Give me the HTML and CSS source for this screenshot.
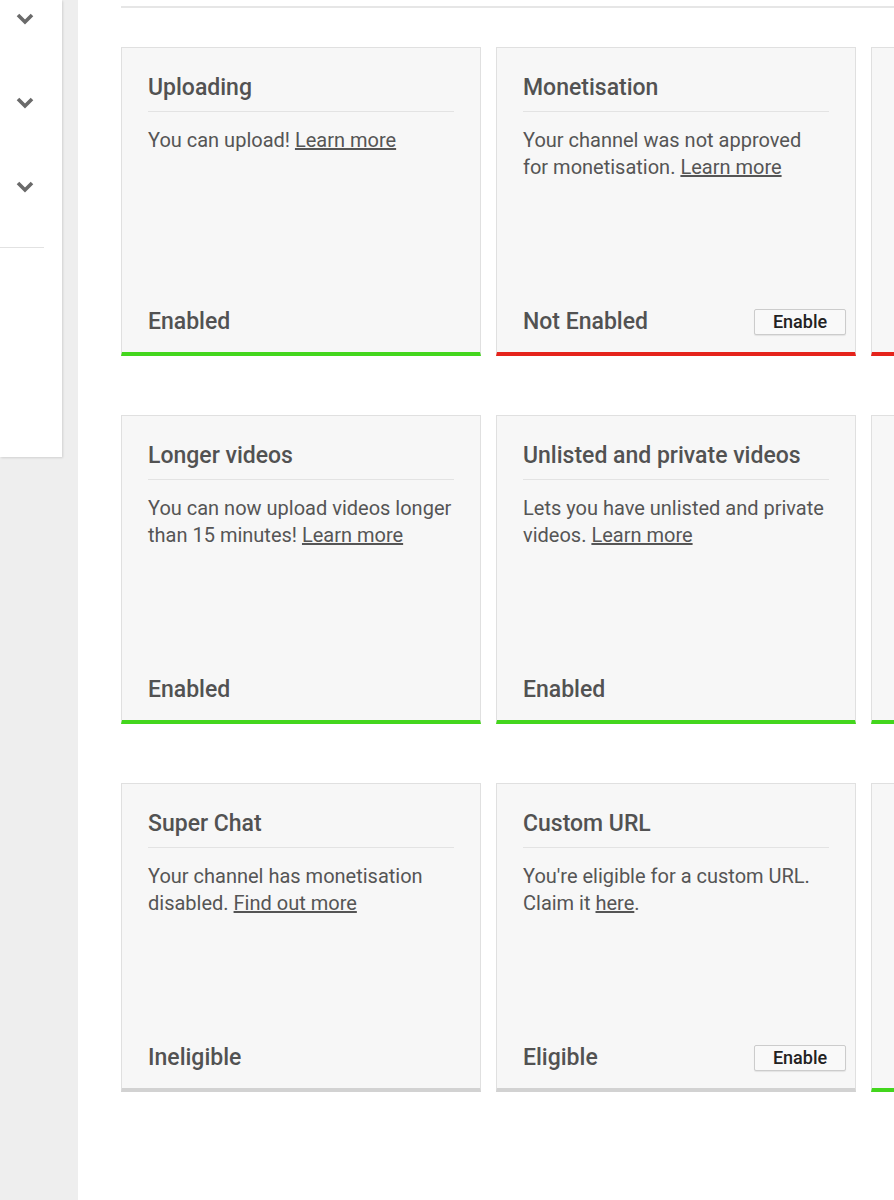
FILE: index.html
```html
<!DOCTYPE html>
<html lang="en">
<head>
<meta charset="utf-8">
<title>Channel features</title>
<link rel="stylesheet" href="styles.css">
</head>
<body>
<div class="page">
  <aside class="sidebar">
    <div class="side-list">
      <div class="side-row"><svg class="chev" width="18" height="12" viewBox="0 0 18 12"><path d="M2 2 L9 9 L16 2" /></svg></div>
      <div class="side-row"><svg class="chev" width="18" height="12" viewBox="0 0 18 12"><path d="M2 2 L9 9 L16 2" /></svg></div>
      <div class="side-row"><svg class="chev" width="18" height="12" viewBox="0 0 18 12"><path d="M2 2 L9 9 L16 2" /></svg></div>
    </div>
    <div class="side-rule"></div>
  </aside>
  <main class="main">
    <div class="top-rule"></div>
    <div class="grid">
      <section class="card green">
        <div class="card-body">
          <h2 class="title">Uploading</h2>
          <p class="desc">You can upload! <a href="#">Learn more</a></p>
        </div>
        <div class="foot"><span class="status">Enabled</span></div>
      </section>
      <section class="card red">
        <div class="card-body">
          <h2 class="title">Monetisation</h2>
          <p class="desc">Your channel was not approved for monetisation. <a href="#">Learn more</a></p>
        </div>
        <div class="foot"><span class="status">Not Enabled</span><button class="btn">Enable</button></div>
      </section>
      <section class="card red"><div class="card-body"></div><div class="foot"></div></section>

      <section class="card green">
        <div class="card-body">
          <h2 class="title">Longer videos</h2>
          <p class="desc">You can now upload videos longer than 15 minutes! <a href="#">Learn more</a></p>
        </div>
        <div class="foot"><span class="status">Enabled</span></div>
      </section>
      <section class="card green">
        <div class="card-body">
          <h2 class="title">Unlisted and private videos</h2>
          <p class="desc">Lets you have unlisted and private videos. <a href="#">Learn more</a></p>
        </div>
        <div class="foot"><span class="status">Enabled</span></div>
      </section>
      <section class="card green"><div class="card-body"></div><div class="foot"></div></section>

      <section class="card grey">
        <div class="card-body">
          <h2 class="title">Super Chat</h2>
          <p class="desc">Your channel has monetisation disabled. <a href="#">Find out more</a></p>
        </div>
        <div class="foot"><span class="status">Ineligible</span></div>
      </section>
      <section class="card grey">
        <div class="card-body">
          <h2 class="title">Custom URL</h2>
          <p class="desc">You're eligible for a custom URL. Claim it <a href="#">here</a>.</p>
        </div>
        <div class="foot"><span class="status">Eligible</span><button class="btn">Enable</button></div>
      </section>
      <section class="card green"><div class="card-body"></div><div class="foot"></div></section>
    </div>
  </main>
</div>
</body>
</html>
```
FILE: styles.css
```css
html, body {
  margin: 0;
  padding: 0;
}
body {
  background: #eeeeee;
  font-family: Roboto, "Liberation Sans", Arial, sans-serif;
  color: #505050;
  width: 894px;
  height: 1200px;
  overflow: hidden;
}
.page {
  display: flex;
  align-items: flex-start;
  gap: 16px;
  height: 1200px;
}
.sidebar {
  flex: 0 0 62px;
  width: 62px;
  height: 457px;
  background: #ffffff;
  box-shadow: 1px 1px 2px rgba(0, 0, 0, 0.12);
  overflow: hidden;
}
.side-list {
  margin-top: -23px;
}
.side-row {
  height: 84px;
  display: flex;
  align-items: center;
  padding-left: 16px;
}
.chev path {
  fill: none;
  stroke: #6a6a6a;
  stroke-width: 3.6;
}
.side-rule {
  margin-top: 18px;
  width: 44px;
  border-top: 1px solid #e2e2e2;
}
.main {
  flex: 1;
  height: 1200px;
  background: #ffffff;
  padding-left: 43px;
  overflow: hidden;
}
.top-rule {
  height: 6px;
  border-bottom: 2px solid #e6e6e6;
}
.grid {
  margin-top: 39px;
  display: grid;
  grid-template-columns: 360px 360px 360px;
  column-gap: 15px;
  row-gap: 59px;
}
.card {
  height: 309px;
  box-sizing: border-box;
  background: #f7f7f7;
  border: 1px solid #e0e0e0;
  border-bottom: 4px solid #d0d0d0;
  display: flex;
  flex-direction: column;
}
.card.green { border-bottom-color: #43d61d; }
.card.red { border-bottom-color: #e5231b; }
.card.grey { border-bottom-color: #d2d2d2; }
.card-body {
  flex: 1;
  padding: 26px 26px 0 26px;
}
.title {
  margin: 0;
  font-size: 23px;
  font-weight: 500;
  line-height: 28px;
  color: #525252;
  padding-bottom: 9px;
  border-bottom: 1px solid #e3e3e3;
}
.desc {
  margin: 15px 0 0 0;
  font-size: 20px;
  line-height: 27px;
  color: #555555;
}
.desc a {
  color: #555555;
  text-decoration: underline;
}
.foot {
  height: 28px;
  padding: 0 9px 16px 26px;
  display: flex;
  align-items: flex-start;
  justify-content: space-between;
}
.status {
  font-size: 23px;
  font-weight: 500;
  line-height: 28px;
  color: #525252;
}
.btn {
  width: 92px;
  height: 26px;
  margin-top: 1px;
  box-sizing: border-box;
  background: #f9f9f9;
  border: 1px solid #cccccc;
  border-radius: 2px;
  box-shadow: 0 1px 1px rgba(0, 0, 0, 0.08);
  font-family: Roboto, "Liberation Sans", Arial, sans-serif;
  font-size: 18px;
  font-weight: 500;
  color: #222222;
  padding: 0;
  line-height: 22px;
}
```
